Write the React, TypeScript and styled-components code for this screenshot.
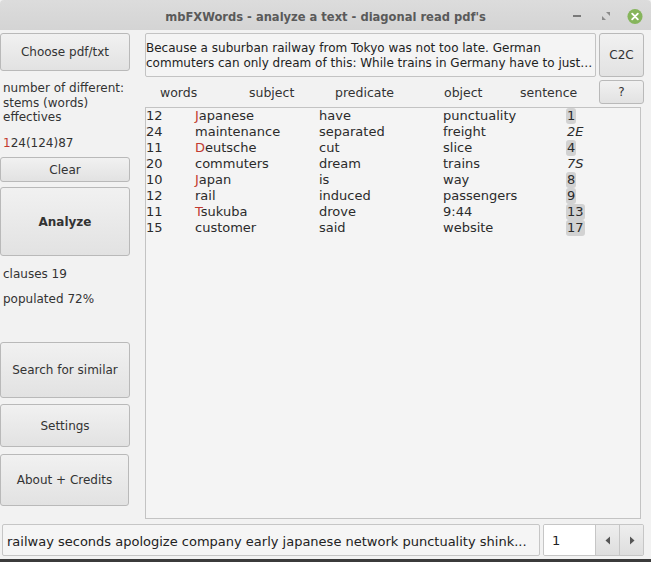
import React from "react";
import styled, { createGlobalStyle } from "styled-components";

const Global = createGlobalStyle`
  html, body { margin: 0; padding: 0; background: #f2f2f2; }
  body { font-family: "DejaVu Sans", "Noto Sans", sans-serif; color: #333; }
  * { box-sizing: border-box; }
`;

const Window = styled.div`
  width: 651px;
  height: 562px;
  display: flex;
  flex-direction: column;
  background: #f2f2f2;
  overflow: hidden;
`;

const TitleBar = styled.div`
  height: 30px;
  flex: none;
  background: linear-gradient(#dcdcdc, #d4d4d4);
  display: grid;
  grid-template-columns: 1fr auto 1fr;
  align-items: center;
  border-top-left-radius: 4px;
  border-top-right-radius: 4px;
`;

const Title = styled.div`
  grid-column: 2;
  font-family: "DejaVu Sans Condensed", "DejaVu Sans", sans-serif;
  font-weight: bold;
  font-size: 12.8px;
  color: #5a5a5a;
  padding-top: 2px;
`;

const Controls = styled.div`
  grid-column: 3;
  justify-self: end;
  display: flex;
  align-items: center;
  gap: 13px;
  padding-right: 8px;
  padding-top: 2px;
`;

const CtrlIcon = styled.div`
  width: 16px;
  height: 16px;
  display: flex;
  align-items: center;
  justify-content: center;
`;

const Main = styled.div`
  flex: 1;
  display: flex;
  min-height: 0;
`;

const Sidebar = styled.div`
  width: 130px;
  flex: none;
  display: flex;
  flex-direction: column;
  padding-top: 3px;
`;

const Button = styled.button<{ $h: number; $mt?: number; $bold?: boolean; $w?: number }>`
  height: ${(p) => p.$h}px;
  width: ${(p) => (p.$w ? p.$w + "px" : "100%")};
  margin-top: ${(p) => p.$mt ?? 0}px;
  flex: none;
  border: 1px solid #b9b9b9;
  border-radius: 3px;
  background: linear-gradient(#f1f1f1, #e2e2e2);
  font-family: "DejaVu Sans", sans-serif;
  font-size: 12px;
  font-weight: ${(p) => (p.$bold ? "bold" : "normal")};
  color: #333;
  padding: 0;
  cursor: default;
`;

const InfoText = styled.div<{ $mt: number }>`
  margin-top: ${(p) => p.$mt}px;
  padding-left: 3px;
  font-size: 12px;
  line-height: 14.5px;
  color: #333;
`;

const Red = styled.span`
  color: #c23a30;
`;

const Right = styled.div`
  flex: 1;
  min-width: 0;
  display: flex;
  flex-direction: column;
  padding: 3px 7px 0 15px;
  gap: 3px;
`;

const TopRow = styled.div`
  display: flex;
  gap: 3px;
  height: 44px;
  flex: none;
`;

const TextBox = styled.div`
  flex: 1;
  min-width: 0;
  border: 1px solid #c3c3c3;
  border-radius: 2px;
  background: #f4f4f4;
  padding: 7px 2px 0 0;
  font-size: 12px;
  line-height: 15px;
  color: #222;
`;

const TextLine = styled.div`
  white-space: nowrap;
  overflow: hidden;
  text-overflow: ellipsis;
`;

const HeaderRow = styled.div`
  display: flex;
  height: 24px;
  flex: none;
  align-items: center;
  gap: 3px;
`;

const HeaderLabels = styled.div`
  flex: 1;
  display: grid;
  grid-template-columns: 89px 86px 109px 76px auto;
  padding-left: 15px;
  font-size: 12.5px;
  color: #333;
`;

const List = styled.div`
  flex: 1;
  margin-right: 3px;
  border: 1px solid #c3c3c3;
  background: #f4f4f4;
  padding: 0;
`;

const Row = styled.div`
  display: grid;
  grid-template-columns: 49px 124px 124px 124px auto;
  height: 16px;
  line-height: 16px;
  font-size: 13px;
  color: #2b2b2b;
`;

const Sent = styled.span<{ $hl?: boolean; $it?: boolean }>`
  justify-self: start;
  font-style: ${(p) => (p.$it ? "italic" : "normal")};
  background: ${(p) => (p.$hl ? "#d2d2d2" : "transparent")};
  border-radius: 3px;
  margin-left: -1px;
  padding: 0 1px;
  line-height: 15px;
`;

const Bottom = styled.div`
  height: 40px;
  flex: none;
  display: flex;
  gap: 3px;
  padding: 5px 7px 3px 2px;
`;

const BottomField = styled.div`
  flex: 1;
  border: 1px solid #c6c6c6;
  border-radius: 2px;
  background: #f5f5f5;
  padding: 3px 0 0 4px;
  display: flex;
  align-items: center;
  font-size: 13px;
  color: #222;
  white-space: nowrap;
  overflow: hidden;
`;

const Spinner = styled.div`
  width: 101px;
  flex: none;
  display: flex;
  border: 1px solid #c6c6c6;
  border-radius: 2px;
  overflow: hidden;
`;

const SpinInput = styled.div`
  flex: 1;
  background: #fff;
  padding-left: 8px;
  display: flex;
  align-items: center;
  font-size: 13px;
  color: #222;
`;

const SpinBtn = styled.div`
  width: 24px;
  border-left: 1px solid #c6c6c6;
  background: linear-gradient(#eeeeee, #dedede);
  display: flex;
  align-items: center;
  justify-content: center;
`;

const DeskStrip = styled.div`
  height: 3px;
  flex: none;
  background: #3b3b3b;
`;

type R = { n: string; w: string; cap?: boolean; p: string; o: string; s: string; hl?: boolean; it?: boolean };

const rows: R[] = [
  { n: "12", w: "Japanese", cap: true, p: "have", o: "punctuality", s: "1", hl: true },
  { n: "24", w: "maintenance", p: "separated", o: "freight", s: "2E", it: true },
  { n: "11", w: "Deutsche", cap: true, p: "cut", o: "slice", s: "4", hl: true },
  { n: "20", w: "commuters", p: "dream", o: "trains", s: "7S", it: true },
  { n: "10", w: "Japan", cap: true, p: "is", o: "way", s: "8", hl: true },
  { n: "12", w: "rail", p: "induced", o: "passengers", s: "9", hl: true },
  { n: "11", w: "Tsukuba", cap: true, p: "drove", o: "9:44", s: "13", hl: true },
  { n: "15", w: "customer", p: "said", o: "website", s: "17", hl: true },
];

export default function App() {
  return (
    <Window>
      <Global />
      <TitleBar>
        <Title>mbFXWords - analyze a text - diagonal read pdf's</Title>
        <Controls>
          <CtrlIcon>
            <svg width="10" height="4" viewBox="0 0 10 4">
              <rect x="1" y="1" width="8" height="2" fill="#7a7a7a" />
            </svg>
          </CtrlIcon>
          <CtrlIcon>
            <svg width="10" height="10" viewBox="0 0 10 10">
              <polygon points="5,1 9,1 9,5" fill="#8a8a8a" />
              <polygon points="1,5 1,9 5,9" fill="#8a8a8a" />
            </svg>
          </CtrlIcon>
          <CtrlIcon>
            <svg width="17" height="17" viewBox="0 0 17 17">
              <circle cx="8.5" cy="8.5" r="8" fill="#86b55c" />
              <path d="M5.5 5.5 L11.5 11.5 M11.5 5.5 L5.5 11.5" stroke="#fff" strokeWidth="2" strokeLinecap="round" />
            </svg>
          </CtrlIcon>
        </Controls>
      </TitleBar>
      <Main>
        <Sidebar>
          <Button $h={38}>Choose pdf/txt</Button>
          <InfoText $mt={10}>
            number of different:
            <br />
            stems (words)
            <br />
            effectives
          </InfoText>
          <InfoText $mt={11}>
            <Red>1</Red>24(124)87
          </InfoText>
          <Button $h={25} $mt={7}>Clear</Button>
          <Button $h={69} $mt={5} $bold>
            Analyze
          </Button>
          <InfoText $mt={11}>clauses 19</InfoText>
          <InfoText $mt={10}>populated 72%</InfoText>
          <Button $h={56} $mt={36}>Search for similar</Button>
          <Button $h={43} $mt={6}>Settings</Button>
          <Button $h={52} $mt={7} $w={129}>
            About + Credits
          </Button>
        </Sidebar>
        <Right>
          <TopRow>
            <TextBox>
              <TextLine>Because a suburban railway from Tokyo was not too late. German</TextLine>
              <TextLine>
                commuters can only dream of this: While trains in Germany have to justify their delays
              </TextLine>
            </TextBox>
            <Button $h={44} $w={45}>
              C2C
            </Button>
          </TopRow>
          <HeaderRow>
            <HeaderLabels>
              <span>words</span>
              <span>subject</span>
              <span>predicate</span>
              <span>object</span>
              <span>sentence</span>
            </HeaderLabels>
            <Button $h={24} $w={45}>
              ?
            </Button>
          </HeaderRow>
          <List>
            {rows.map((r, i) => (
              <Row key={i}>
                <span>{r.n}</span>
                <span>
                  {r.cap ? (
                    <>
                      <Red>{r.w[0]}</Red>
                      {r.w.slice(1)}
                    </>
                  ) : (
                    r.w
                  )}
                </span>
                <span>{r.p}</span>
                <span>{r.o}</span>
                <Sent $hl={r.hl} $it={r.it}>
                  {r.s}
                </Sent>
              </Row>
            ))}
          </List>
        </Right>
      </Main>
      <Bottom>
        <BottomField>railway seconds apologize company early japanese network punctuality shink...</BottomField>
        <Spinner>
          <SpinInput>1</SpinInput>
          <SpinBtn>
            <svg width="6" height="9" viewBox="0 0 6 9">
              <polygon points="5,0.5 5,8.5 0.5,4.5" fill="#555" />
            </svg>
          </SpinBtn>
          <SpinBtn>
            <svg width="6" height="9" viewBox="0 0 6 9">
              <polygon points="1,0.5 1,8.5 5.5,4.5" fill="#555" />
            </svg>
          </SpinBtn>
        </Spinner>
      </Bottom>
      <DeskStrip />
    </Window>
  );
}
